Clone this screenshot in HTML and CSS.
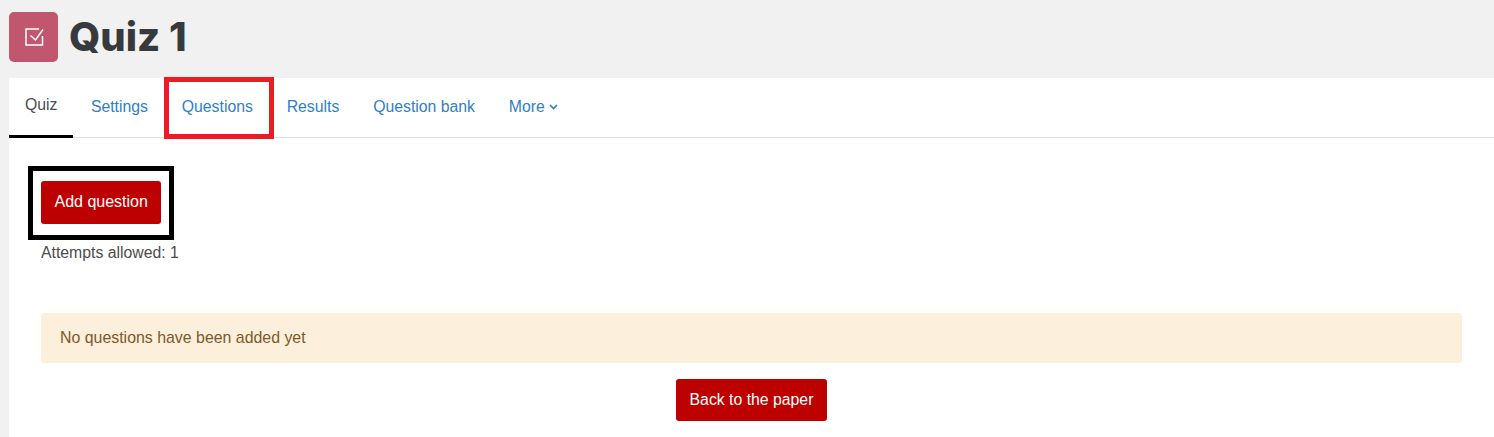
FILE: index.html
```html
<!DOCTYPE html>
<html>
<head>
    <title>Quiz 1</title>
    <link rel="stylesheet" href="styles.css">
</head>
<body>

    <header class="page-header">
        <div class="activity-icon">
            <svg width="24" height="24" viewBox="0 0 24 24" fill="none" stroke="#fff" stroke-width="1.5">
                <path d="M20.5 11v9H4V4h13"/>
                <path d="M8.5 10.5l5 4.5L21 4.5"/>
            </svg>
        </div>
        <h1>Quiz 1</h1>
    </header>

    <main class="card">
        <nav class="tabs">
            <a class="tab active" href="#">Quiz</a>
            <a class="tab" href="#">Settings</a>
            <a class="tab" href="#">Questions</a>
            <a class="tab" href="#">Results</a>
            <a class="tab" href="#">Question bank</a>
            <a class="tab" href="#">More
                <svg class="caret" width="9" height="6" viewBox="0 0 9 6" fill="none" stroke="#2f7fc4" stroke-width="1.7">
                    <path d="M1 1l3.5 3.5L8 1"/>
                </svg>
            </a>
            <span class="mark-red"></span>
        </nav>

        <section class="content">
            <div class="add-row">
                <button class="btn">Add question</button>
                <span class="mark-black"></span>
            </div>
            <p class="attempts">Attempts allowed: 1</p>
            <div class="alert">No questions have been added yet</div>
            <div class="back-row">
                <button class="btn btn-back">Back to the paper</button>
            </div>
        </section>
    </main>

</body>
</html>
```

FILE: styles.css
```css
html, body {
    height: 100%;
}

body {
    margin: 0;
    padding-left: 9px;
    background-color: #f1f1f1;
    font-family: "Liberation Sans", Arial, sans-serif;
    font-size: 15.8px;
    color: #4a4d50;
    overflow: hidden;
    box-sizing: border-box;
}

.page-header {
    display: flex;
    align-items: center;
    gap: 11px;
    height: 78px;
    padding-bottom: 4px;
    box-sizing: border-box;
}

.activity-icon {
    width: 49px;
    height: 50px;
    background-color: #c1566f;
    border-radius: 5px;
    display: flex;
    align-items: center;
    justify-content: center;
}

h1 {
    margin: 0;
    font-family: "Inter", sans-serif;
    font-size: 40px;
    font-weight: 800;
    line-height: 50px;
    color: #373a3c;
}

.card {
    background-color: #fff;
    height: 359px;
}

.tabs {
    position: relative;
    display: flex;
    height: 59px;
    border-bottom: 1px solid #dee2e6;
}

.tab {
    display: flex;
    align-items: center;
    gap: 4px;
    height: 58px;
    padding: 0 16.9px;
    color: #2f7fc4;
    text-decoration: none;
}

.tab.active {
    width: 64px;
    margin-right: 1px;
    padding: 0 16px 3px;
    box-sizing: border-box;
    height: 60px;
    color: #4a4d50;
    border-bottom: 3px solid #000;
}

.mark-red {
    position: absolute;
    left: 155px;
    top: -1px;
    width: 100px;
    height: 52px;
    border: 5px solid #ed1c24;
}

.content {
    padding: 43px 32px 0;
}

.add-row {
    position: relative;
    height: 43px;
}

.mark-black {
    position: absolute;
    left: -13px;
    top: -15px;
    width: 136px;
    height: 64px;
    border: 5px solid #000;
}

.btn {
    height: 43px;
    padding: 0 13.5px 2px;
    background-color: #bd0000;
    color: #fff;
    border: none;
    border-radius: 3px;
    font-family: inherit;
    font-size: 16px;
    cursor: pointer;
}

.attempts {
    margin: 20px 0 0;
    line-height: 18px;
}

.alert {
    margin-top: 51px;
    height: 50px;
    line-height: 50px;
    padding: 0 19px;
    background-color: #fcefdc;
    color: #7d5a29;
    border-radius: 3px;
    font-size: 15.9px;
}

.back-row {
    display: flex;
    justify-content: center;
    margin-top: 16px;
}

.btn-back {
    height: 42px;
    padding: 0 14px;
    font-size: 15.8px;
}
```
